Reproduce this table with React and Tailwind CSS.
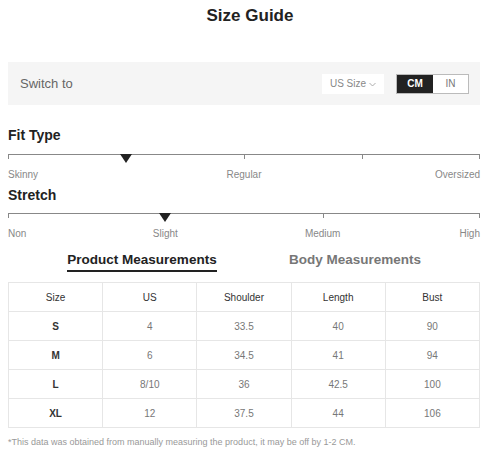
import React from "react";

const rows = [
  ["S", "4", "33.5", "40", "90"],
  ["M", "6", "34.5", "41", "94"],
  ["L", "8/10", "36", "42.5", "100"],
  ["XL", "12", "37.5", "44", "106"],
];

function Scale({ ticks, marker, labels }) {
  return (
    <div className="w-full">
      <div className="relative h-[9px] w-full">
        <div className="absolute left-0 right-0 top-0 h-px bg-[#888]" />
        {ticks.map((t) => (
          <div
            key={t}
            className="absolute top-0 h-[5px] w-px bg-[#888]"
            style={{ left: `calc(${t}% - ${t === 100 ? 1 : 0}px)` }}
          />
        ))}
        <div
          className="absolute top-0 h-0 w-0 border-l-[6px] border-r-[6px] border-t-[9px] border-l-transparent border-r-transparent border-t-[#222]"
          style={{ left: `calc(${marker}% - 6px)` }}
        />
      </div>
      <div className="relative mt-[5px] h-[14px] text-[10px] leading-[14px] text-[#888]">
        {labels.map(([pos, text]) => (
          <span
            key={text}
            className="absolute top-0 whitespace-nowrap"
            style={
              pos === 0
                ? { left: 0 }
                : pos === 100
                ? { right: 0 }
                : { left: `${pos}%`, transform: "translateX(-50%)" }
            }
          >
            {text}
          </span>
        ))}
      </div>
    </div>
  );
}

export default function App() {
  return (
    <div
      className="w-[500px] h-[455px] bg-white overflow-hidden"
      style={{ fontFamily: '"Liberation Sans", Arial, sans-serif' }}
    >
      <div className="pt-[5px] text-center text-[17px] font-bold leading-[22px] text-[#222]">
        Size Guide
      </div>
      <div className="ml-[8px] w-[472px]">
        <div className="mt-[35px] flex h-[43px] items-center bg-[#f5f5f5] pl-[12px] pr-[11px]">
          <span className="text-[13px] text-[#666]">Switch to</span>
          <div className="ml-auto flex h-[20px] w-[62px] items-center justify-center bg-white text-[10px] text-[#888]">
            US Size
            <svg width="7" height="5" viewBox="0 0 7 5" className="ml-[3px] mt-[1px]">
              <path d="M0.5 1 L3.5 4 L6.5 1" fill="none" stroke="#999" strokeWidth="0.8" />
            </svg>
          </div>
          <div className="ml-[12px] flex h-[20px] w-[73px] border border-[#bbb]">
            <div className="flex w-[36px] items-center justify-center bg-[#222] text-[10px] font-bold text-white">
              CM
            </div>
            <div className="flex flex-1 items-center justify-center bg-white text-[10px] text-[#777]">
              IN
            </div>
          </div>
        </div>

        <div className="mt-[21px] text-[14px] font-bold leading-[18px] text-[#222]">Fit Type</div>
        <div className="mt-[10px]">
          <Scale
            ticks={[0, 50, 75, 100]}
            marker={25}
            labels={[
              [0, "Skinny"],
              [50, "Regular"],
              [100, "Oversized"],
            ]}
          />
        </div>

        <div className="mt-[4px] text-[14px] font-bold leading-[18px] text-[#222]">Stretch</div>
        <div className="mt-[9px]">
          <Scale
            ticks={[0, 66.67, 100]}
            marker={33.33}
            labels={[
              [0, "Non"],
              [33.33, "Slight"],
              [66.67, "Medium"],
              [100, "High"],
            ]}
          />
        </div>

        <div className="mt-[10px] flex h-[24px] items-start">
          <div className="ml-[59px] w-[150px] whitespace-nowrap border-b-2 border-[#222] pb-[1px] text-center text-[13.5px] font-bold leading-[18px] text-[#222]">
            Product Measurements
          </div>
          <div className="ml-[72px] w-[132px] whitespace-nowrap text-center text-[13.5px] font-bold leading-[18px] text-[#777]">
            Body Measurements
          </div>
        </div>

        <table className="mt-[7px] w-[472px] table-fixed border-collapse text-[10px]">
          <thead>
            <tr className="h-[29px]">
              {["Size", "US", "Shoulder", "Length", "Bust"].map((h) => (
                <th key={h} className="border border-[#e6e6e6] text-center font-normal text-[#333]">
                  {h}
                </th>
              ))}
            </tr>
          </thead>
          <tbody>
            {rows.map((r) => (
              <tr key={r[0]} className="h-[29px]">
                {r.map((c, i) => (
                  <td
                    key={i}
                    className={
                      "border border-[#e6e6e6] text-center " +
                      (i === 0 ? "font-bold text-[#333]" : "text-[#777]")
                    }
                  >
                    {c}
                  </td>
                ))}
              </tr>
            ))}
          </tbody>
        </table>

        <div className="mt-[8px] text-[9px] text-[#999]">
          *This data was obtained from manually measuring the product, it may be off by 1-2 CM.
        </div>
      </div>
    </div>
  );
}
